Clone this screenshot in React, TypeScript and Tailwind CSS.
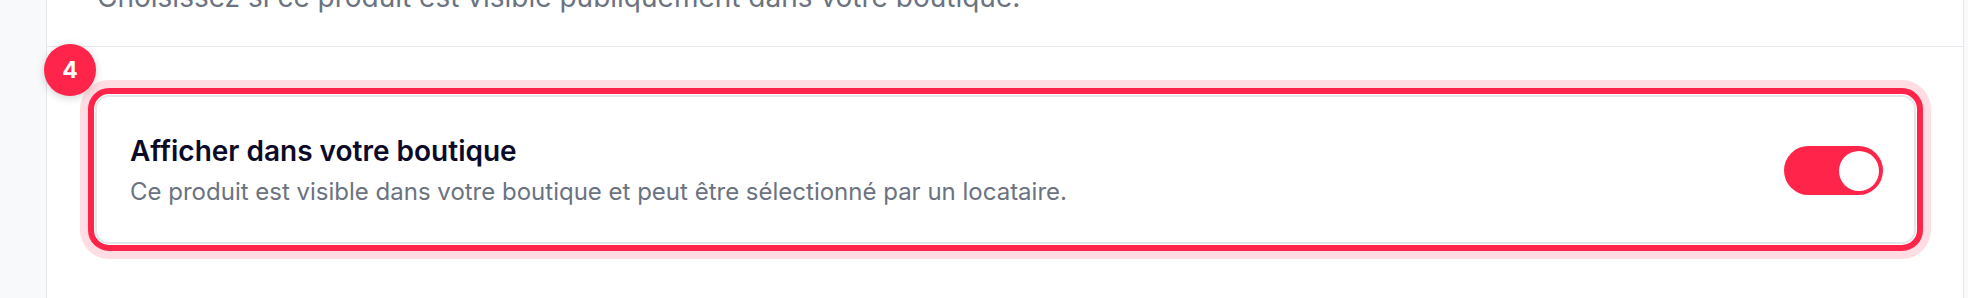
import React, { useState } from 'react';

const App: React.FC = () => {
  const [visible, setVisible] = useState(true);

  return (
    <div
      className="flex h-[298px] w-full overflow-hidden bg-[#f8f9fb]"
      style={{ fontFamily: 'Inter, "Noto Sans", sans-serif' }}
    >
      <div className="w-[46px] shrink-0" />

      {/* Main panel */}
      <div className="relative flex-1 border-x-[1.5px] border-[#e5e7eb] bg-white mr-[4px]">
        {/* Previous section (cut off) */}
        <div className="h-[47px] overflow-hidden border-b-[1.5px] border-[#e5e7eb] pl-[50px]">
          <p className="-mt-[20px] text-[28px] leading-[34px] text-[#6b7280]">
            Choisissez si ce produit est visible publiquement dans votre boutique.
          </p>
        </div>

        {/* Highlighted step */}
        <div className="relative pt-[41px] pl-[41px] pr-[40px]">
          <div className="absolute -left-[3px] -top-[3px] z-10 flex h-[52px] w-[52px] items-center justify-center rounded-full bg-[#ff2449] text-[23px] font-bold text-white shadow-[0_2px_8px_rgba(0,0,0,0.18)]">
            4
          </div>

          <div className="rounded-[21px] border-[6px] border-[#ff2449] bg-white p-[1px] shadow-[0_0_0_8px_#ffdde3]">
            <div className="flex items-center justify-between rounded-[14px] border-2 border-[#e5e7eb] bg-white pl-[33px] pr-[31px] pt-[37px] pb-[35px]">
              <div className="flex flex-col gap-[9px]">
                <h3 className="text-[28px] font-semibold leading-[34px] text-[#0c0a29]">
                  Afficher dans votre boutique
                </h3>
                <p className="text-[24px] leading-[30px] text-[#6b7280]">
                  Ce produit est visible dans votre boutique et peut être sélectionné par un locataire.
                </p>
              </div>

              <button
                type="button"
                onClick={() => setVisible(!visible)}
                className={`flex h-[49px] w-[99px] shrink-0 items-center rounded-full p-[4.5px] ${
                  visible ? 'justify-end bg-[#ff2449]' : 'justify-start bg-gray-300'
                }`}
              >
                <span className="block h-[40px] w-[40px] rounded-full bg-white" />
              </button>
            </div>
          </div>
        </div>
      </div>
    </div>
  );
};

export default App;
